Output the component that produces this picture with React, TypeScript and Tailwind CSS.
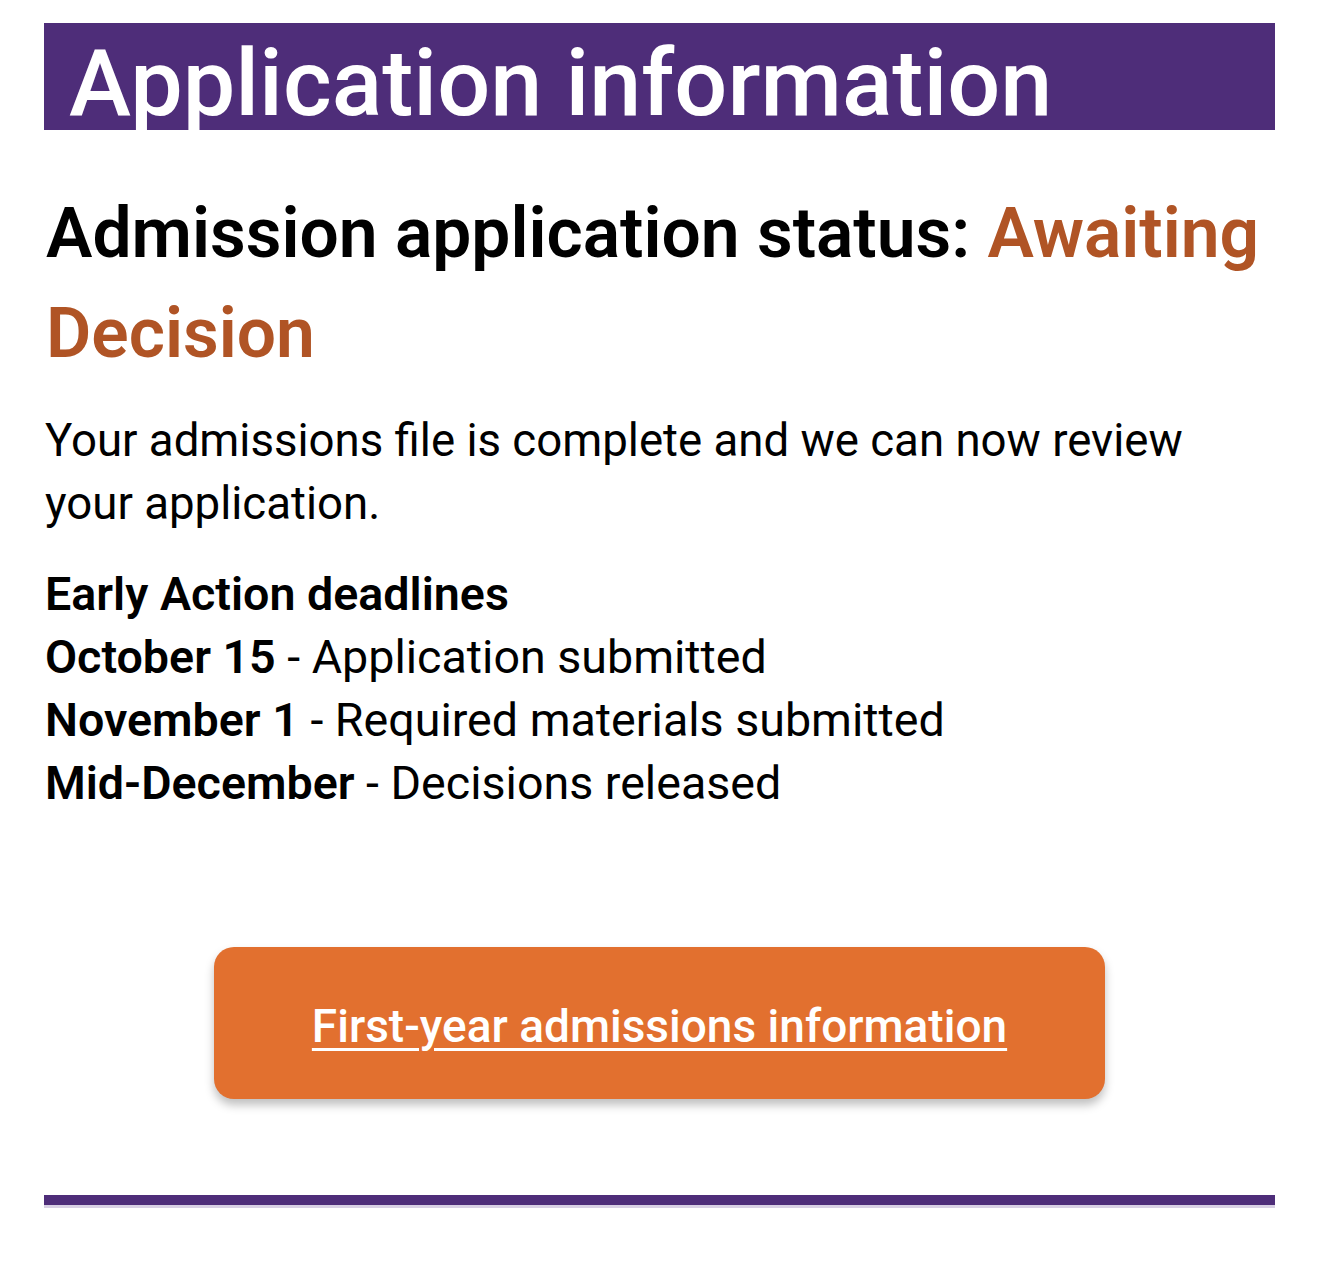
import React from "react";

export default function App() {
  return (
    <div className="min-h-[1273px] bg-white px-[44px] pt-[23px] text-black" style={{ fontFamily: "Roboto, 'Liberation Sans', sans-serif" }}>
      <div className="bg-[#4e2d79] h-[107px] pl-[25px] flex items-center overflow-hidden">
        <h1 className="text-white text-[93.5px] font-medium leading-none mt-[14px]">Application information</h1>
      </div>
      <h2 className="mt-[54px] text-[69.5px] font-semibold leading-[100px] pl-[2px]">
        Admission application status: <span className="text-[#b05425]">Awaiting Decision</span>
      </h2>
      <p className="mt-[25px] text-[45.6px] leading-[63px] pl-[1px] pr-[40px]">
        Your admissions file is complete and we can now review your application.
      </p>
      <div className="mt-[28px] text-[46.6px] leading-[63px] pl-[1px]">
        <div className="font-semibold">Early Action deadlines</div>
        <div><span className="font-semibold">October 15</span> - Application submitted</div>
        <div><span className="font-semibold">November 1</span> - Required materials submitted</div>
        <div><span className="font-semibold">Mid-December</span> - Decisions released</div>
      </div>
      <div className="flex justify-center mt-[132px]">
        <a href="#" className="w-[891px] h-[152px] bg-[#e2702f] rounded-[20px] shadow-[0_6px_10px_rgba(0,0,0,0.25)] flex items-center justify-center text-white text-[46px] font-medium underline underline-offset-[6px] decoration-[3px] pt-[6px]">
          First-year admissions information
        </a>
      </div>
      <div className="mt-[96px] h-[10px] bg-[#4e2d79] border-b-[3px] border-[#d8d0e4] box-content" />
    </div>
  );
}
